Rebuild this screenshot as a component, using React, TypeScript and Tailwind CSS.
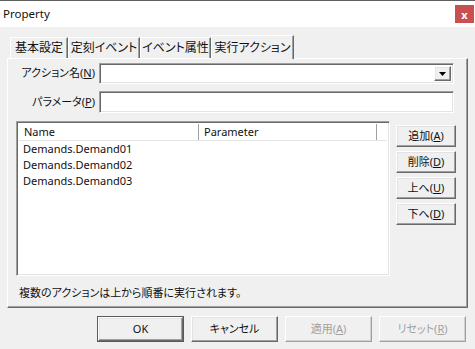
import React from "react";

const font = "[font-family:'Noto_Sans','Noto_Sans_CJK_JP',sans-serif] [font-feature-settings:'palt']";

const raised =
  "border-t border-l border-t-white border-l-white border-r border-b border-r-[#696969] border-b-[#696969] shadow-[inset_-1px_-1px_0_#a0a0a0,inset_1px_1px_0_#e3e3e3]";
const sunken =
  "border-t border-l border-t-[#a0a0a0] border-l-[#a0a0a0] border-r border-b border-r-white border-b-white shadow-[inset_1px_1px_0_#696969,inset_-1px_-1px_0_#e3e3e3]";

const rows = ["Demands.Demand01", "Demands.Demand02", "Demands.Demand03"];

const Tab = ({ label, w, active }: { label: string; w: string; active?: boolean }) => (
  <div
    className={
      active
        ? `${w} relative z-10 h-[24px] -mb-px bg-[#f0f0f0] border-t border-l border-t-white border-l-white border-r border-r-[#696969] shadow-[inset_-1px_0_0_#a0a0a0] flex items-center justify-center text-[12px]`
        : `${w} mt-[2px] h-[21px] bg-[#f0f0f0] border-t border-l border-t-white border-l-white border-r border-r-[#696969] shadow-[inset_-1px_0_0_#a0a0a0] flex items-center justify-center text-[12px]`
    }
  >
    {label}
  </div>
);

const SideButton = ({ label, k }: { label: string; k: string }) => (
  <div className={`${raised} w-[60px] h-[22px] flex items-center justify-center text-[11px] bg-[#f0f0f0]`}>
    {label}(<span className="underline">{k}</span>)
  </div>
);

export default function App() {
  return (
    <div className={`${font} w-[475px] h-[349px] bg-[#f0f0f0] overflow-hidden border-t border-[#5f5f5f] text-[#111]`}>
      <div className="h-[26px] bg-white flex items-center justify-between pl-[3px] pr-[1px]">
        <span className="text-[11.5px] leading-none">Property</span>
        <div className="w-[19px] h-[18px] bg-[#c75050] text-white text-[11px] font-bold flex items-center justify-center leading-none">
          x
        </div>
      </div>

      <div className="pl-[7px] pr-[7px] pt-[7px]">
        <div className="flex items-end pl-[3px] h-[24px]">
          <Tab label="基本設定" w="w-[58px]" />
          <Tab label="定刻イベント" w="w-[72px]" />
          <Tab label="イベント属性" w="w-[71px]" />
          <Tab label="実行アクション" w="w-[83px]" active />
        </div>

        <div className="w-[461px] h-[250px] border-t border-l border-t-white border-l-white border-r border-b border-r-[#696969] border-b-[#696969] shadow-[inset_-1px_-1px_0_#a0a0a0] flex flex-col">
          <div className="flex items-center mt-[4px] h-[21px]">
            <div className="w-[88px] text-right text-[11px] pr-[1px]">
              アクション名(<span className="underline">N</span>)
            </div>
            <div className={`${sunken} ml-[3px] w-[355px] h-[21px] bg-white flex justify-end items-stretch p-[2px]`}>
              <div className={`${raised} w-[17px] flex items-center justify-center bg-[#f0f0f0]`}>
                <svg width="7" height="4" viewBox="0 0 7 4">
                  <path d="M0 0h7L3.5 4z" fill="#000" />
                </svg>
              </div>
            </div>
          </div>

          <div className="flex items-center mt-[7px] h-[22px]">
            <div className="w-[88px] text-right text-[11px] pr-[1px]">
              パラメータ(<span className="underline">P</span>)
            </div>
            <div className={`${sunken} ml-[3px] w-[355px] h-[22px] bg-white`} />
          </div>

          <div className="flex mt-[8px] pl-[8px] gap-[6px]">
            <div className={`${sunken} w-[374px] h-[155px] bg-white p-[2px] flex flex-col`}>
              <div className="flex h-[17px] text-[11px] bg-white border-b border-[#e5e5e5]">
                <div className="w-[180px] pl-[5px] flex items-center border-r border-[#a0a0a0] shadow-[1px_0_0_#fff]">Name</div>
                <div className="w-[178px] pl-[5px] flex items-center border-r border-[#a0a0a0]">Parameter</div>
                <div className="flex-1" />
              </div>
              <div>
                {rows.map((r) => (
                  <div key={r} className="h-[16px] pl-[4px] text-[11px] leading-[16px]">
                    {r}
                  </div>
                ))}
              </div>
            </div>
            <div className="flex flex-col gap-[4px] pt-[4px]">
              <SideButton label="追加" k="A" />
              <SideButton label="削除" k="D" />
              <SideButton label="上へ" k="U" />
              <SideButton label="下へ" k="D" />
            </div>
          </div>

          <div className="pl-[11px] mt-[9px] h-[16px] leading-[16px] text-[11px]">
            複数のアクションは上から順番に実行されます。
          </div>
        </div>
      </div>

      <div className="flex justify-end gap-[7px] pr-[9px] mt-[8px]">
        <div className="w-[87px] h-[26px] border border-[#5a5a5a] p-0 flex">
          <div className={`${raised} flex-1 flex items-center justify-center text-[11px]`}>OK</div>
        </div>
        <div className={`${raised} w-[87px] h-[26px] flex items-center justify-center text-[11px]`}>キャンセル</div>
        <div className="w-[87px] h-[26px] border-t border-l border-t-white border-l-white border-r border-b border-r-[#a0a0a0] border-b-[#a0a0a0] shadow-[inset_-1px_-1px_0_#d0d0d0] flex items-center justify-center text-[11px] text-[#a0a0a0]">
          適用(<span className="underline">A</span>)
        </div>
        <div className="w-[87px] h-[26px] border-t border-l border-t-white border-l-white border-r border-b border-r-[#a0a0a0] border-b-[#a0a0a0] shadow-[inset_-1px_-1px_0_#d0d0d0] flex items-center justify-center text-[11px] text-[#a0a0a0]">
          リセット(<span className="underline">R</span>)
        </div>
      </div>
    </div>
  );
}
